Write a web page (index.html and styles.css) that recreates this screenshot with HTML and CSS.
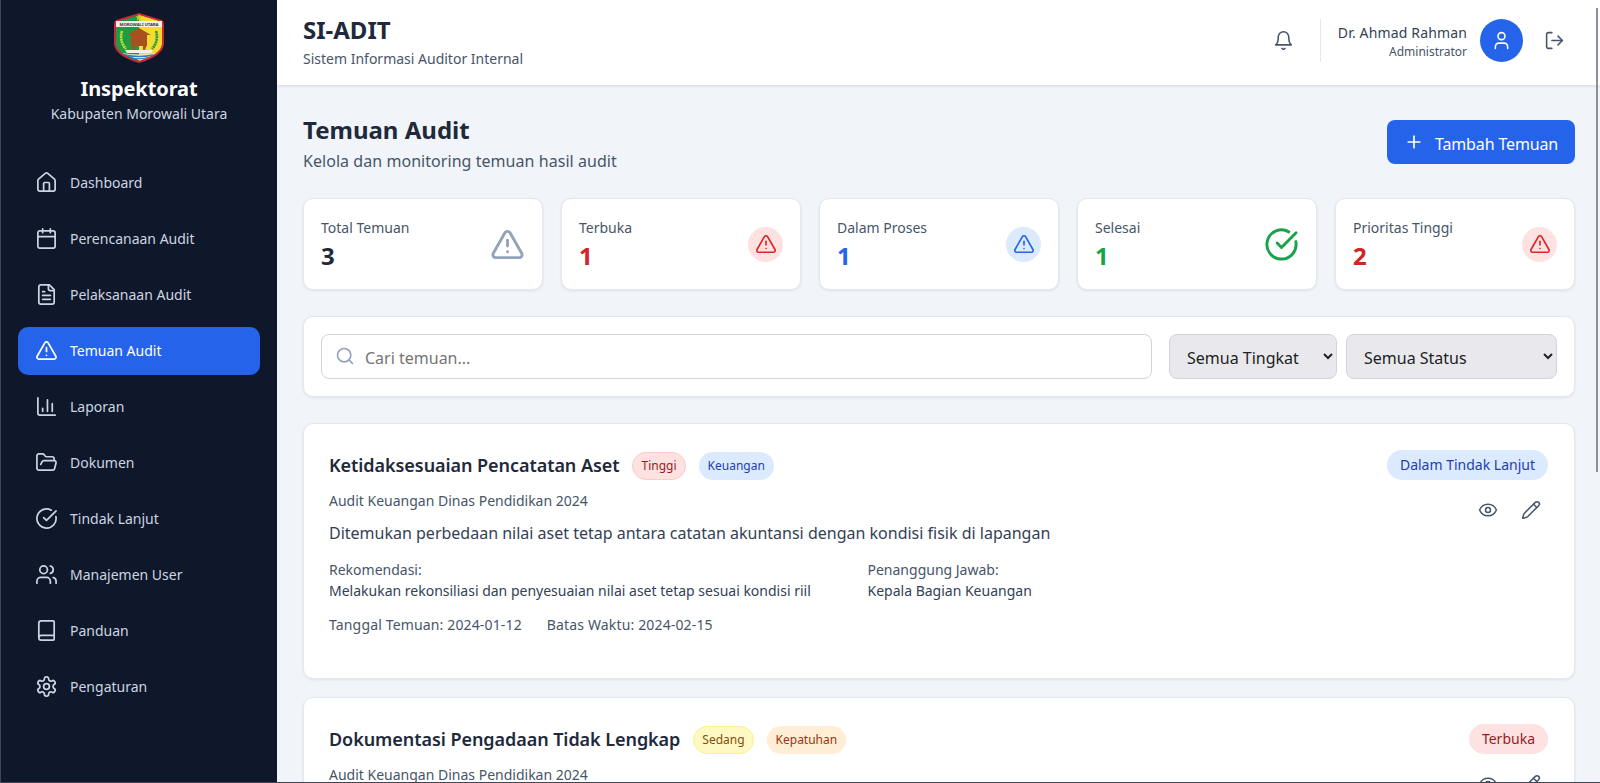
FILE: index.html
```html
<!DOCTYPE html>
<html lang="id">
<head>
    <meta charset="UTF-8">
    <meta name="viewport" content="width=device-width, initial-scale=1.0">
    <title>SI-ADIT - Temuan Audit</title>
    <link rel="stylesheet" href="styles.css">
</head>
<body>
    <svg class="icon-defs" aria-hidden="true">
        <symbol id="i-home" viewBox="0 0 24 24"><path d="M15 21v-8a1 1 0 0 0-1-1h-4a1 1 0 0 0-1 1v8"/><path d="M3 10a2 2 0 0 1 .709-1.528l7-5.999a2 2 0 0 1 2.582 0l7 5.999A2 2 0 0 1 21 10v9a2 2 0 0 1-2 2H5a2 2 0 0 1-2-2z"/></symbol>
        <symbol id="i-calendar" viewBox="0 0 24 24"><path d="M8 2v4"/><path d="M16 2v4"/><rect x="3" y="4" width="18" height="18" rx="2"/><path d="M3 10h18"/></symbol>
        <symbol id="i-file" viewBox="0 0 24 24"><path d="M15 2H6a2 2 0 0 0-2 2v16a2 2 0 0 0 2 2h12a2 2 0 0 0 2-2V7Z"/><path d="M14 2v4a2 2 0 0 0 2 2h4"/><path d="M10 9H8"/><path d="M16 13H8"/><path d="M16 17H8"/></symbol>
        <symbol id="i-alert" viewBox="0 0 24 24"><path d="m21.73 18-8-14a2 2 0 0 0-3.48 0l-8 14A2 2 0 0 0 4 21h16a2 2 0 0 0 1.73-3"/><path d="M12 9v4"/><path d="M12 17h.01"/></symbol>
        <symbol id="i-chart" viewBox="0 0 24 24"><path d="M3 3v16a2 2 0 0 0 2 2h16"/><path d="M18 17V9"/><path d="M13 17V5"/><path d="M8 17v-3"/></symbol>
        <symbol id="i-folder" viewBox="0 0 24 24"><path d="m6 14 1.5-2.9A2 2 0 0 1 9.24 10H20a2 2 0 0 1 1.94 2.5l-1.54 6a2 2 0 0 1-1.95 1.5H4a2 2 0 0 1-2-2V5a2 2 0 0 1 2-2h3.9a2 2 0 0 1 1.69.9l.81 1.2a2 2 0 0 0 1.67.9H18a2 2 0 0 1 2 2v2"/></symbol>
        <symbol id="i-check" viewBox="0 0 24 24"><path d="M21.801 10A10 10 0 1 1 17 3.335"/><path d="m9 11 3 3L22 4"/></symbol>
        <symbol id="i-users" viewBox="0 0 24 24"><path d="M16 21v-2a4 4 0 0 0-4-4H6a4 4 0 0 0-4 4v2"/><circle cx="9" cy="7" r="4"/><path d="M22 21v-2a4 4 0 0 0-3-3.87"/><path d="M16 3.13a4 4 0 0 1 0 7.75"/></symbol>
        <symbol id="i-book" viewBox="0 0 24 24"><path d="M4 19.5v-15A2.5 2.5 0 0 1 6.5 2H19a1 1 0 0 1 1 1v18a1 1 0 0 1-1 1H6.5a1 1 0 0 1 0-5H20"/></symbol>
        <symbol id="i-gear" viewBox="0 0 24 24"><path d="M12.22 2h-.44a2 2 0 0 0-2 2v.18a2 2 0 0 1-1 1.73l-.43.25a2 2 0 0 1-2 0l-.15-.08a2 2 0 0 0-2.73.73l-.22.38a2 2 0 0 0 .73 2.73l.15.1a2 2 0 0 1 1 1.72v.51a2 2 0 0 1-1 1.74l-.15.09a2 2 0 0 0-.73 2.73l.22.38a2 2 0 0 0 2.73.73l.15-.08a2 2 0 0 1 2 0l.43.25a2 2 0 0 1 1 1.73V20a2 2 0 0 0 2 2h.44a2 2 0 0 0 2-2v-.18a2 2 0 0 1 1-1.73l.43-.25a2 2 0 0 1 2 0l.15.08a2 2 0 0 0 2.73-.73l.22-.39a2 2 0 0 0-.73-2.73l-.15-.08a2 2 0 0 1-1-1.74v-.5a2 2 0 0 1 1-1.74l.15-.09a2 2 0 0 0 .73-2.73l-.22-.38a2 2 0 0 0-2.73-.73l-.15.08a2 2 0 0 1-2 0l-.43-.25a2 2 0 0 1-1-1.73V4a2 2 0 0 0-2-2z"/><circle cx="12" cy="12" r="3"/></symbol>
        <symbol id="i-bell" viewBox="0 0 24 24"><path d="M6 8a6 6 0 0 1 12 0c0 7 3 9 3 9H3s3-2 3-9"/><path d="M10.3 21a1.94 1.94 0 0 0 3.4 0"/></symbol>
        <symbol id="i-user" viewBox="0 0 24 24"><path d="M19 21v-2a4 4 0 0 0-4-4H9a4 4 0 0 0-4 4v2"/><circle cx="12" cy="7" r="4"/></symbol>
        <symbol id="i-logout" viewBox="0 0 24 24"><path d="M9 21H5a2 2 0 0 1-2-2V5a2 2 0 0 1 2-2h4"/><path d="m16 17 5-5-5-5"/><path d="M21 12H9"/></symbol>
        <symbol id="i-plus" viewBox="0 0 24 24"><path d="M5 12h14"/><path d="M12 5v14"/></symbol>
        <symbol id="i-search" viewBox="0 0 24 24"><circle cx="11" cy="11" r="8"/><path d="m21 21-4.3-4.3"/></symbol>
        <symbol id="i-eye" viewBox="0 0 24 24"><path d="M2.062 12.348a1 1 0 0 1 0-.696 10.75 10.75 0 0 1 19.876 0 1 1 0 0 1 0 .696 10.75 10.75 0 0 1-19.876 0"/><circle cx="12" cy="12" r="3"/></symbol>
        <symbol id="i-pencil" viewBox="0 0 24 24"><path d="M21.174 6.812a1 1 0 0 0-3.986-3.987L3.842 16.174a2 2 0 0 0-.5.83l-1.321 4.352a.5.5 0 0 0 .623.622l4.353-1.32a2 2 0 0 0 .83-.497z"/><path d="m15 5 4 4"/></symbol>
    </svg>

    <div class="app">
        <aside class="sidebar">
            <div class="brand">
                <svg class="brand-logo" viewBox="0 0 54 52">
                    <path d="M27 1 L50 8 Q52 9 52 12 L52 32 Q51 44 27 51 Q3 44 2 32 L2 12 Q2 9 4 8 Z" fill="#c8283a"/>
                    <path d="M27 3 L4 10 L4 32 Q5 42 27 49 Z" fill="#1f9a45"/>
                    <path d="M27 3 L50 10 L50 32 Q49 42 27 49 Z" fill="#f3dc2e"/>
                    <rect x="4" y="9" width="46" height="6" fill="#f4f0e6"/>
                    <text x="27" y="13.8" class="logo-text" text-anchor="middle">MOROWALI UTARA</text>
                    <path d="M27 2 l1 2.2 2.4.3-1.8 1.6.5 2.4-2.1-1.2-2.1 1.2.5-2.4-1.8-1.6 2.4-.3z" fill="#d9c22b"/>
                    <path d="M10 19 Q7 29 14 37" fill="none" stroke="#c8e02a" stroke-width="2.6" stroke-dasharray="2 .6"/>
                    <path d="M44 19 Q47 29 40 37" fill="none" stroke="#1f9a45" stroke-width="2.6" stroke-dasharray="2 .6"/>
                    <path d="M27 16 L39 23 L35 23 L35 33 L33 38 L31 38 L31 34 L23 34 L23 38 L21 38 L19 33 L19 23 L15 23 Z" fill="#a8511f"/>
                    <path d="M13 38 H41 L39 41 H15 Z" fill="#f4f0e6"/>
                    <path d="M10 41 Q27 44 44 41 L27 48 Z" fill="#f4f0e6"/>
                    <path d="M13 43 Q27 46 41 43" fill="none" stroke="#2f7fc4" stroke-width="1.4"/>
                    <path d="M18 45.5 Q27 48 36 45.5" fill="none" stroke="#2f7fc4" stroke-width="1.2"/>
                </svg>
                <h2 class="brand-name">Inspektorat</h2>
                <p class="brand-sub">Kabupaten Morowali Utara</p>
            </div>
            <nav class="nav">
                <a class="nav-item"><svg class="ic ic-nav"><use href="#i-home"/></svg>Dashboard</a>
                <a class="nav-item"><svg class="ic ic-nav"><use href="#i-calendar"/></svg>Perencanaan Audit</a>
                <a class="nav-item"><svg class="ic ic-nav"><use href="#i-file"/></svg>Pelaksanaan Audit</a>
                <a class="nav-item active"><svg class="ic ic-nav"><use href="#i-alert"/></svg>Temuan Audit</a>
                <a class="nav-item"><svg class="ic ic-nav"><use href="#i-chart"/></svg>Laporan</a>
                <a class="nav-item"><svg class="ic ic-nav"><use href="#i-folder"/></svg>Dokumen</a>
                <a class="nav-item"><svg class="ic ic-nav"><use href="#i-check"/></svg>Tindak Lanjut</a>
                <a class="nav-item"><svg class="ic ic-nav"><use href="#i-users"/></svg>Manajemen User</a>
                <a class="nav-item"><svg class="ic ic-nav"><use href="#i-book"/></svg>Panduan</a>
                <a class="nav-item"><svg class="ic ic-nav"><use href="#i-gear"/></svg>Pengaturan</a>
            </nav>
        </aside>

        <div class="main">
            <header class="topbar">
                <div>
                    <h1 class="app-title">SI-ADIT</h1>
                    <p class="app-sub">Sistem Informasi Auditor Internal</p>
                </div>
                <div class="topbar-right">
                    <svg class="ic ic-bell"><use href="#i-bell"/></svg>
                    <div class="user">
                        <div class="user-text">
                            <div class="user-name">Dr. Ahmad Rahman</div>
                            <div class="user-role">Administrator</div>
                        </div>
                        <div class="avatar"><svg class="ic ic-avatar"><use href="#i-user"/></svg></div>
                        <svg class="ic ic-logout"><use href="#i-logout"/></svg>
                    </div>
                </div>
            </header>

            <main class="content">
                <div class="page-head">
                    <div>
                        <h2 class="page-title">Temuan Audit</h2>
                        <p class="page-sub">Kelola dan monitoring temuan hasil audit</p>
                    </div>
                    <button class="btn-add"><svg class="ic ic-plus"><use href="#i-plus"/></svg><span class="btn-label">Tambah Temuan</span></button>
                </div>

                <div class="stats">
                    <div class="card stat">
                        <div><div class="stat-label">Total Temuan</div><div class="stat-value">3</div></div>
                        <svg class="ic ic-stat gray"><use href="#i-alert"/></svg>
                    </div>
                    <div class="card stat">
                        <div><div class="stat-label">Terbuka</div><div class="stat-value red">1</div></div>
                        <div class="stat-dot dot-red"><svg class="ic ic-dot"><use href="#i-alert"/></svg></div>
                    </div>
                    <div class="card stat">
                        <div><div class="stat-label">Dalam Proses</div><div class="stat-value blue">1</div></div>
                        <div class="stat-dot dot-blue"><svg class="ic ic-dot"><use href="#i-alert"/></svg></div>
                    </div>
                    <div class="card stat">
                        <div><div class="stat-label">Selesai</div><div class="stat-value green">1</div></div>
                        <svg class="ic ic-stat green"><use href="#i-check"/></svg>
                    </div>
                    <div class="card stat">
                        <div><div class="stat-label">Prioritas Tinggi</div><div class="stat-value red">2</div></div>
                        <div class="stat-dot dot-red"><svg class="ic ic-dot"><use href="#i-alert"/></svg></div>
                    </div>
                </div>

                <div class="card filters">
                    <div class="search">
                        <svg class="ic ic-search"><use href="#i-search"/></svg>
                        <input class="search-input" type="text" placeholder="Cari temuan...">
                    </div>
                    <select class="select select-level"><option>Semua Tingkat</option></select>
                    <select class="select select-status"><option>Semua Status</option></select>
                </div>

                <article class="card finding">
                    <div class="finding-body">
                        <div class="finding-title-row">
                            <h3 class="finding-title">Ketidaksesuaian Pencatatan Aset</h3>
                            <span class="tag tag-high">Tinggi</span>
                            <span class="tag tag-blue">Keuangan</span>
                        </div>
                        <p class="finding-audit">Audit Keuangan Dinas Pendidikan 2024</p>
                        <p class="finding-desc">Ditemukan perbedaan nilai aset tetap antara catatan akuntansi dengan kondisi fisik di lapangan</p>
                        <div class="finding-grid">
                            <div>
                                <div class="muted">Rekomendasi:</div>
                                <div class="dark">Melakukan rekonsiliasi dan penyesuaian nilai aset tetap sesuai kondisi riil</div>
                            </div>
                            <div>
                                <div class="muted">Penanggung Jawab:</div>
                                <div class="dark">Kepala Bagian Keuangan</div>
                            </div>
                        </div>
                        <div class="finding-dates">
                            <span>Tanggal Temuan: 2024-01-12</span>
                            <span>Batas Waktu: 2024-02-15</span>
                        </div>
                    </div>
                    <div class="finding-side">
                        <span class="status status-blue">Dalam Tindak Lanjut</span>
                        <div class="actions">
                            <svg class="ic ic-action"><use href="#i-eye"/></svg>
                            <svg class="ic ic-action"><use href="#i-pencil"/></svg>
                        </div>
                    </div>
                </article>

                <article class="card finding">
                    <div class="finding-body">
                        <div class="finding-title-row">
                            <h3 class="finding-title">Dokumentasi Pengadaan Tidak Lengkap</h3>
                            <span class="tag tag-mid">Sedang</span>
                            <span class="tag tag-orange">Kepatuhan</span>
                        </div>
                        <p class="finding-audit">Audit Keuangan Dinas Pendidikan 2024</p>
                    </div>
                    <div class="finding-side">
                        <span class="status status-red">Terbuka</span>
                        <div class="actions">
                            <svg class="ic ic-action"><use href="#i-eye"/></svg>
                            <svg class="ic ic-action"><use href="#i-pencil"/></svg>
                        </div>
                    </div>
                </article>
            </main>
        </div>
    </div>

    <div class="scroll-thumb"></div>
    <div class="window-edge"></div>
</body>
</html>
```

FILE: styles.css
```css
* {
    box-sizing: border-box;
}
html, body {
    margin: 0;
    height: 100%;
    overflow: hidden;
}
body {
    font-family: "Noto Sans", "Liberation Sans", sans-serif;
    background: #f1f5f9;
    color: #1e293b;
}
h1, h2, h3, p {
    margin: 0;
}
.icon-defs {
    display: none;
}
.ic {
    fill: none;
    stroke: currentColor;
    stroke-width: 2;
    stroke-linecap: round;
    stroke-linejoin: round;
    flex-shrink: 0;
}
.app {
    display: flex;
    height: 783px;
}

/* sidebar */
.sidebar {
    width: 277px;
    flex-shrink: 0;
    background: #0f172a;
    border-left: 1px solid #3f4652;
    color: #fff;
}
.brand {
    text-align: center;
    padding-top: 12px;
    height: 159px;
}
.brand-logo {
    display: block;
    width: 54px;
    height: 52px;
    margin: 0 auto 11px;
}
.logo-text {
    font-size: 4.2px;
    font-weight: 700;
    fill: #333;
}
.brand-name {
    font-size: 20px;
    line-height: 28px;
    font-weight: 700;
    letter-spacing: -0.1px;
}
.brand-sub {
    font-size: 14px;
    line-height: 20px;
    color: #cbd5e1;
    margin-top: 1px;
}
.nav {
    display: flex;
    flex-direction: column;
    gap: 8px;
    padding: 0 17px;
}
.nav-item {
    display: flex;
    align-items: center;
    gap: 12px;
    height: 48px;
    padding: 0 17px 2px;
    border-radius: 10px;
    font-size: 14px;
    color: #cbd5e1;
}
.nav-item.active {
    background: #2563eb;
    color: #fff;
}
.ic-nav {
    width: 23px;
    height: 23px;
    stroke-width: 1.8;
}

/* top bar */
.main {
    flex: 1;
    min-width: 0;
}
.topbar {
    height: 85px;
    background: #fff;
    box-shadow: 0 1px 3px rgba(0, 0, 0, 0.12);
    display: flex;
    align-items: center;
    justify-content: space-between;
    padding: 0 35px 0 26px;
    position: relative;
}
.app-title {
    font-size: 24px;
    line-height: 28px;
    font-weight: 700;
    color: #1e293b;
}
.app-sub {
    font-size: 14px;
    line-height: 20px;
    color: #475569;
    margin-top: 5px;
}
.topbar-right {
    display: flex;
    align-items: center;
    padding-bottom: 4px;
}
.ic-bell {
    width: 21px;
    height: 21px;
    color: #475569;
    stroke-width: 1.8;
}
.user {
    display: flex;
    align-items: center;
    margin-left: 26px;
    padding-left: 17px;
    border-left: 1px solid #e2e8f0;
    height: 43px;
}
.user-text {
    text-align: right;
    margin-right: 13px;
}
.user-name {
    font-size: 14px;
    line-height: 20px;
    letter-spacing: 0.15px;
    padding-top: 1px;
    color: #334155;
}
.user-role {
    font-size: 12px;
    line-height: 16px;
    color: #475569;
    margin-top: 1px;
}
.avatar {
    width: 43px;
    height: 43px;
    border-radius: 50%;
    background: #2563eb;
    color: #fff;
    display: flex;
    align-items: center;
    justify-content: center;
}
.ic-avatar {
    width: 21px;
    height: 21px;
    stroke-width: 1.8;
}
.ic-logout {
    width: 21px;
    height: 21px;
    color: #475569;
    margin-left: 21px;
    stroke-width: 1.8;
}

/* page content */
.content {
    padding: 30px 25px 0 26px;
}
.page-head {
    display: flex;
    justify-content: space-between;
    align-items: flex-start;
    margin-bottom: 25px;
}
.page-title {
    font-size: 24px;
    line-height: 30px;
    font-weight: 700;
}
.page-sub {
    font-size: 16px;
    line-height: 24px;
    letter-spacing: 0.05px;
    color: #475569;
    margin-top: 4px;
}
.btn-add {
    display: flex;
    align-items: center;
    gap: 11px;
    height: 44px;
    margin-top: 5px;
    padding: 0 17px;
    border: none;
    border-radius: 8px;
    background: #2563eb;
    color: #fff;
    font-family: inherit;
    font-size: 16px;
    font-weight: 400;
}
.btn-label {
    padding-top: 3px;
    letter-spacing: -0.15px;
}
.ic-plus {
    width: 20px;
    height: 20px;
}
.card {
    background: #fff;
    border: 1px solid #e2e8f0;
    border-radius: 10px;
    box-shadow: 0 1px 3px rgba(0, 0, 0, 0.08);
}

/* stat cards */
.stats {
    display: grid;
    grid-template-columns: repeat(5, 1fr);
    gap: 18px;
    margin-bottom: 26px;
}
.stat {
    height: 92px;
    padding: 2px 17px 0;
    display: flex;
    align-items: center;
    justify-content: space-between;
}
.stat-label {
    font-size: 14px;
    line-height: 20px;
    color: #475569;
}
.stat-value {
    font-size: 24px;
    line-height: 32px;
    font-weight: 700;
    margin-top: 2px;
}
.red { color: #d12424; }
.blue { color: #2563eb; }
.green { color: #16a34a; }
.gray { color: #94a3b8; }
.ic-stat {
    width: 35px;
    height: 35px;
    margin-top: -2px;
}
.stat-dot {
    width: 35px;
    height: 35px;
    margin-top: -2px;
    border-radius: 50%;
    display: flex;
    align-items: center;
    justify-content: center;
}
.dot-red {
    background: #fee2e2;
    color: #dc2626;
}
.dot-blue {
    background: #dbeafe;
    color: #2563eb;
}
.ic-dot {
    width: 22px;
    height: 22px;
    stroke-width: 1.8;
}

/* filters */
.filters {
    display: flex;
    align-items: center;
    gap: 9px;
    height: 81px;
    padding: 0 17px;
    margin-bottom: 26px;
}
.search {
    flex: 1;
    position: relative;
    margin-right: 8px;
}
.ic-search {
    position: absolute;
    left: 14px;
    top: 12px;
    width: 20px;
    height: 20px;
    color: #94a3b8;
}
.search-input {
    width: 100%;
    height: 45px;
    padding: 3px 14px 0 43px;
    border: 1px solid #d1d5db;
    border-radius: 8px;
    font-family: inherit;
    font-size: 16px;
    color: #1e293b;
    outline: none;
}
.search-input::placeholder {
    color: #757575;
}
.select {
    height: 45px;
    padding: 3px 13px 0;
    border: 1px solid #d4d4d8;
    border-radius: 8px;
    background-color: #e9e9ed;
    font-family: inherit;
    font-size: 16px;
    color: #222;
}
.select-level {
    width: 168px;
}
.select-status {
    width: 211px;
}

/* finding cards */
.finding {
    display: flex;
    height: 256px;
    padding: 26px 26px 0 25px;
    margin-bottom: 18px;
}
.finding-body {
    flex: 1;
    min-width: 0;
    padding-top: 1px;
}
.finding-title-row {
    display: flex;
    align-items: center;
    gap: 13px;
    height: 30px;
}
.finding-title {
    font-size: 18px;
    line-height: 28px;
    font-weight: 600;
    letter-spacing: -0.06px;
    padding-bottom: 2px;
    color: #1e293b;
}
.tag {
    font-size: 12px;
    line-height: 16px;
    padding: 5px 8px;
    border-radius: 14px;
    border: 1px solid transparent;
}
.tag-high {
    background: #fee2e2;
    border-color: #fecaca;
    color: #991b1b;
}
.tag-mid {
    background: #fef9c3;
    border-color: #fef08a;
    color: #854d0e;
}
.tag-blue {
    background: #dbeafe;
    color: #1e40af;
}
.tag-orange {
    background: #ffedd5;
    color: #9a3412;
}
.finding-audit {
    font-size: 14px;
    line-height: 20px;
    color: #475569;
    margin-top: 10px;
}
.finding-desc {
    font-size: 16px;
    line-height: 24px;
    color: #334155;
    margin-top: 10px;
}
.finding-grid {
    display: grid;
    grid-template-columns: 1fr 1fr;
    gap: 19px;
    margin-top: 15px;
    font-size: 14px;
    line-height: 20px;
}
.finding-grid .dark {
    margin-top: 1px;
}
.muted {
    color: #475569;
}
.dark {
    color: #334155;
}
.finding-dates {
    display: flex;
    gap: 25px;
    margin-top: 14px;
    font-size: 14px;
    line-height: 20px;
    letter-spacing: 0.15px;
    color: #475569;
}
.finding-side {
    display: flex;
    flex-direction: column;
    align-items: flex-end;
    width: 161px;
    flex-shrink: 0;
}
.status {
    font-size: 14px;
    line-height: 20px;
    padding: 5px 13px;
    border-radius: 15px;
    white-space: nowrap;
}
.status-blue {
    background: #dbeafe;
    color: #1e40af;
}
.status-red {
    background: #fee2e2;
    color: #991b1b;
}
.actions {
    display: flex;
    gap: 23px;
    margin-top: 20px;
    margin-right: 7px;
}
.ic-action {
    width: 20px;
    height: 20px;
    color: #475569;
    stroke-width: 1.8;
}

/* window chrome that sits over the page */
.scroll-thumb {
    position: absolute;
    top: 8px;
    left: 1596px;
    width: 2px;
    height: 464px;
    background: #8a8f98;
}
.window-edge {
    position: absolute;
    left: 0;
    right: 0;
    top: 782px;
    height: 1px;
    background: #3f4652;
}
```
